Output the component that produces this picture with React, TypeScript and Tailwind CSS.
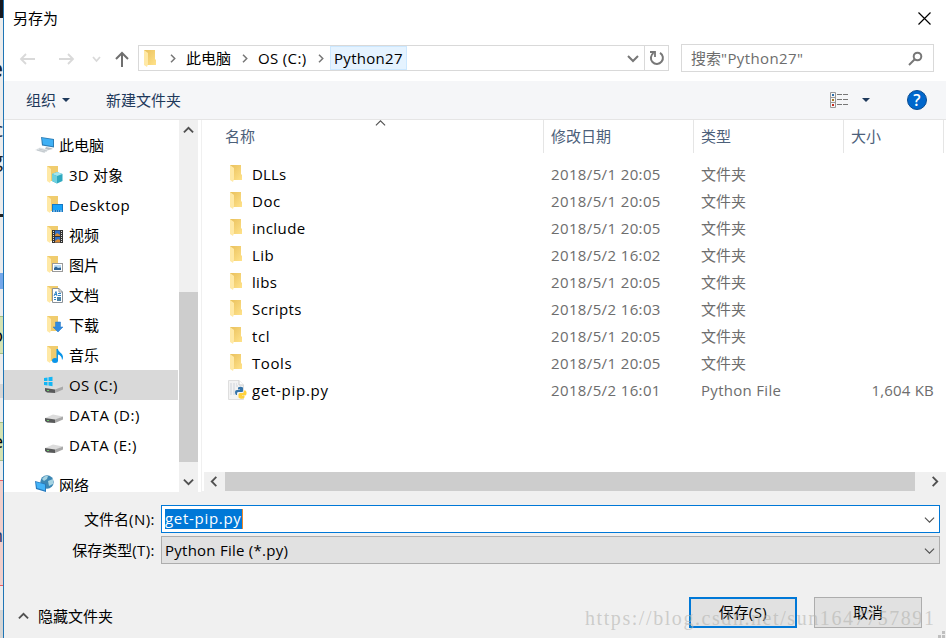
import React from "react";

type Badge = "cube" | "desktop" | "video" | "picture" | "document" | "download" | "music";

function Chevron({ d, size = 11, color = "#505050", w = 2 }: { d: "up" | "down" | "left" | "right"; size?: number; color?: string; w?: number }) {
  const paths = { up: "M1 8 L6 3 L11 8", down: "M1 4 L6 9 L11 4", left: "M8 1 L3 6 L8 11", right: "M4 1 L9 6 L4 11" };
  return (
    <svg width={size} height={size} viewBox="0 0 12 12" fill="none" stroke={color} strokeWidth={w} className="shrink-0">
      <path d={paths[d]} />
    </svg>
  );
}

function Folder() {
  return (
    <svg width="12" height="17" viewBox="0 0 12 17" className="shrink-0">
      <defs>
        <linearGradient id="fold" x1="0" x2="1" y1="0" y2="1">
          <stop offset="0" stopColor="#e9c05c" />
          <stop offset="1" stopColor="#ffe28a" />
        </linearGradient>
      </defs>
      <path d="M0 0H11V9L12 10V15H2L0 14Z" fill="url(#fold)" />
      <path d="M0 0L4 3V14L3 17L0 15Z" fill="#ffe9a6" />
    </svg>
  );
}

function BadgeShape({ kind }: { kind: Badge }) {
  switch (kind) {
    case "cube":
      return (
        <g>
          <path d="M5 8L10 6L15.500 8V15L10 17.500L5 15Z" fill="#2fa9c0" />
          <path d="M5 8L10 6L15.500 8L10 10Z" fill="#a6e6ee" />
          <path d="M5 8L10 10V17.500L5 15Z" fill="#6fd0de" />
        </g>
      );
    case "desktop":
      return (
        <g>
          <rect x="5" y="8" width="11" height="8" fill="#1478c4" />
          <rect x="6" y="9" width="9" height="5" fill="#18a4f8" />
          <path d="M6 15H8M9 15H10M11 15H12M13 15H15" stroke="#bfe4ff" />
        </g>
      );
    case "video":
      return (
        <g>
          <rect x="5" y="4" width="11" height="13" fill="#333" />
          <path d="M6.500 5V17M14.500 5V17" stroke="#ddd" strokeDasharray="1 1" />
          <rect x="8" y="4.500" width="5" height="5.500" fill="#3170c8" />
          <rect x="8" y="11" width="5" height="5.500" fill="#3170c8" />
          <path d="M8 9L10 7L13 9V10H8ZM8 15L11 13L13 14V16.500H8Z" fill="#d98b34" />
        </g>
      );
    case "picture":
      return (
        <g>
          <rect x="5.500" y="7.500" width="10" height="8" fill="#fff" stroke="#9a9a9a" />
          <rect x="7" y="9" width="7" height="5" fill="#b7daf5" />
          <path d="M7 12L9 10.500L11 12L14 11.500V14H7Z" fill="#2f6597" />
        </g>
      );
    case "document":
      return (
        <g>
          <path d="M5.500 2.500H12L15.500 6V16.500H5.500Z" fill="#fff" stroke="#8b9298" />
          <path d="M12 2.500V6H15.500" fill="none" stroke="#8b9298" />
          <path d="M11 7.500H14M11 9.500H14M7 11.500H9M7 13.500H9" stroke="#2d83c5" />
          <path d="M7 10L9 5.500L10 10M7.500 8.500H10" fill="none" stroke="#2d83c5" />
          <rect x="10" y="11" width="4" height="4" fill="#4b83a8" />
        </g>
      );
    case "download":
      return <path d="M8.500 6H13.500V11H16L11 16L6 11H8.500Z" fill="#318be0" stroke="#2476c4" strokeWidth=".5" />;
    case "music":
      return (
        <g fill="#0a95e8">
          <ellipse cx="8" cy="14.500" rx="3" ry="2.500" />
          <path d="M9.500 3H11C11 6 16 7 16 11C16 12.500 15.500 13.500 15 14C15 10.500 13 9 11 8.500V15H9.500Z" />
        </g>
      );
  }
}

function BadgeFolder({ kind }: { kind: Badge }) {
  return (
    <svg width="17" height="18" viewBox="0 0 17 18" className="shrink-0">
      <path d="M0 0H11V15H2L0 14Z" fill="#f0cc6e" />
      <path d="M0 0L4 3V14L3 17L0 15Z" fill="#ffe9a6" />
      <BadgeShape kind={kind} />
    </svg>
  );
}

function Drive({ os = false }: { os?: boolean }) {
  return (
    <svg width="20" height="18" viewBox="0 0 20 18" className="shrink-0">
      <path d="M1 12L9 8.500L19 10.500L11 14Z" fill="#dcdcdc" />
      <path d="M1 12L11 13.500V17L3 16.500L1 15Z" fill="#58595a" />
      <path d="M11 13.500L19 10.500V13.500L11 17Z" fill="#a9a9a9" />
      <rect x="3" y="14" width="2" height="1" fill="#6ec96e" />
      {os && (
        <path fill="#12b6f5" d="M0 2L3.500 1.500V5H0ZM4.500 1.300L8.500 .7V5H4.500ZM0 6H3.500V9.500L0 9ZM4.500 6H8.500V10.200L4.500 9.600Z" />
      )}
    </svg>
  );
}

function Computer() {
  return (
    <svg width="20" height="18" viewBox="0 0 20 18" className="shrink-0">
      <path d="M6 1L19 3V11.500L7 9.500Z" fill="#2d7db5" />
      <path d="M7 2L18 3.800V10.300L8 8.600Z" fill="#3fb0f5" />
      <path d="M11 11L16 12L18 13L13 14L10 13Z" fill="#b5bdc3" />
      <path d="M0 14L5 11.500L14 14L9 17Z" fill="#dfe4e7" />
      <path d="M2 14L10 16M4 13L12 15" stroke="#aeb5ba" strokeWidth=".6" />
    </svg>
  );
}

function Network() {
  return (
    <svg width="19" height="18" viewBox="0 0 19 18" className="shrink-0">
      <circle cx="12" cy="7" r="6.700" fill="#3c87b4" />
      <path d="M7 4Q10 0 13 1L12 4L9 6ZM13 6L18 4L18 9L14 11Z" fill="#a5d3e2" />
      <path d="M0 6L11 9V17L1 14Z" fill="#2679bd" />
      <path d="M1 7L10 9.500V15.500L2 13Z" fill="#43b3f8" />
    </svg>
  );
}

function PyFile() {
  return (
    <svg width="19" height="20" viewBox="0 0 19 20" className="shrink-0">
      <path d="M.5.5H11L15.500 5V19.500H.5Z" fill="#f3f3f3" stroke="#dedede" />
      <path d="M11 .5V5H15.500" fill="#fff" stroke="#ccc" />
      <path d="M2 4H9M2 6H11M2 8H8M2 10H7M2 12H7M2 14H7" stroke="#cfd3da" strokeDasharray="2 1" />
      <path d="M10 7.500Q12.500 6 15 7.500V11Q15 12 14 12H10Q9 12 9 13.500V15H8Q7 14 7 12Q7 10 9 10H12V9.500H10Z" fill="#3473a8" />
      <path d="M16 10.500H17.500Q19 11.500 18.500 14Q18 15.500 17 15.500H14V16H16.500V17.500Q15 19.500 12 18.500L10.500 17.500V14.500Q10.500 13 12 13H15Q16 12.500 16 11.500Z" fill="#ffd13b" />
    </svg>
  );
}

const places: { label: string; kind?: Badge; os?: boolean; track?: string }[] = [
  { label: "3D 对象", kind: "cube", track: "tracking-[0.2px]" },
  { label: "Desktop", kind: "desktop", track: "tracking-[0.45px]" },
  { label: "视频", kind: "video" },
  { label: "图片", kind: "picture" },
  { label: "文档", kind: "document" },
  { label: "下载", kind: "download" },
  { label: "音乐", kind: "music" },
  { label: "OS (C:)", os: true, track: "tracking-[0.4px]" },
  { label: "DATA (D:)", track: "tracking-[0.6px]" },
  { label: "DATA (E:)", track: "tracking-[0.55px]" },
];

const files = [
  ["DLLs", "2018/5/1 20:05", "tracking-[0.15px]"],
  ["Doc", "2018/5/1 20:05", "tracking-[0.6px]"],
  ["include", "2018/5/1 20:05", "tracking-[0.4px]"],
  ["Lib", "2018/5/2 16:02", "tracking-[0.4px]"],
  ["libs", "2018/5/1 20:05", "tracking-[0.3px]"],
  ["Scripts", "2018/5/2 16:03", "tracking-[0.4px]"],
  ["tcl", "2018/5/1 20:05", "tracking-[0.6px]"],
  ["Tools", "2018/5/1 20:05", "tracking-[0.6px]"],
  ["get-pip.py", "2018/5/2 16:01", "tracking-[0.72px]"],
];

function PageEdge() {
  return (
    <div className="flex h-full w-[3px] shrink-0 flex-col overflow-hidden bg-[#ececec]">
      <div className="h-[18px] bg-[#151820]" />
      <div className="mt-[40px] flex h-[19px] justify-end text-[24px] leading-[19px] font-bold text-[#1c2430]">e</div>
      <div className="mt-[44px] flex h-[18px] justify-end text-[20px] leading-[18px] text-[#1c3050]">c</div>
      <div className="mt-[12px] flex h-[20px] justify-end text-[20px] leading-[18px] text-[#222]">g</div>
      <div className="mt-[43px] h-[3px] bg-[#222]" />
      <div className="mt-[56px] h-[16px] bg-[#74a7ea]" />
      <div className="mt-[27px] flex h-[38px] justify-end border-y border-[#a5bd83] bg-[#d5e2b2] text-[18px] leading-[36px]">o</div>
      <div className="mt-[30px] h-[14px] bg-[#d5d5d5]" />
      <div className="mt-[24px] flex h-[39px] justify-end border-y border-[#a5bd83] bg-[#d5e2b2] text-[18px] leading-[36px]">e</div>
      <div className="mt-[19px] flex h-[106px] justify-end border-y border-[#ec5f65] bg-[#f0cfcb] pt-[40px] text-[18px] leading-[28px] text-[#21386b]">n</div>
      <div className="mt-[24px] flex-1 bg-[#d5d5d5]" />
    </div>
  );
}

function AddressBar() {
  return (
    <div className="mt-[9px] flex h-[26px] w-[531px] border border-[#d9d9d9] bg-white">
      <div className="flex flex-1 items-center">
        <div className="ml-[5px]"><Folder /></div>
        <div className="ml-[12px] flex"><Chevron d="right" size={9} color="#777" /></div>
        <span className="-mt-px ml-[9px] w-[47px]">此电脑</span>
        <div className="ml-[7px] flex"><Chevron d="right" size={9} color="#777" /></div>
        <span className="-mt-px ml-[9px] w-[49px] tracking-[0.35px] whitespace-nowrap">OS (C:)</span>
        <div className="ml-[9px] flex"><Chevron d="right" size={9} color="#777" /></div>
        <span className="ml-[5px] flex h-[24px] w-[77px] items-center border border-[#cce8ff] bg-[#e5f3ff] pb-px pl-[3px] tracking-[0.3px]">Python27</span>
      </div>
      <div className="flex w-[23px] items-center justify-center"><Chevron d="down" size={12} color="#777" /></div>
      <div className="flex w-[24px] items-center justify-center border-l border-[#d9d9d9]">
        <svg width="16" height="16" viewBox="0 0 16 16" fill="none" stroke="#777" strokeWidth="2">
          <path d="M11 2.800A6 6 0 1 1 4.500 3" />
          <path d="M1 2H6V7" strokeWidth="1.800" />
        </svg>
      </div>
    </div>
  );
}

function Sidebar() {
  return (
    <div className="h-[372px] w-[175px] overflow-hidden pt-[10px]">
      <div className="flex h-[30px] items-center pl-[31px]">
        <Computer />
        <span className="ml-[4px]">此电脑</span>
      </div>
      {places.map((p) => (
        <div key={p.label} className={"flex h-[30px] w-[174px] items-center " + (p.os ? "bg-[#d9d9d9] " : "") + (p.kind ? "pl-[43px]" : "pl-[40px]")}>
          {p.kind ? <BadgeFolder kind={p.kind} /> : <Drive os={p.os} />}
          <span className={"ml-[5px] " + (p.track ?? "")}>{p.label}</span>
        </div>
      ))}
      <div className="mt-[9px] flex h-[30px] items-center pl-[31px]">
        <Network />
        <span className="ml-[5px] pt-px">网络</span>
      </div>
    </div>
  );
}

function FileList() {
  return (
    <div className="flex flex-1 flex-col border-l border-[#f0f0f0]">
      <div className="flex h-[33px] text-[#4c607a]">
        <div className="relative w-[342px] border-r border-[#e5e5e5] pl-[23px] leading-[33px]">
          名称
          <div className="absolute top-[-2px] left-[173px]"><Chevron d="up" size={11} w={1.200} /></div>
        </div>
        <div className="w-[150px] border-r border-[#e5e5e5] pl-[7px] leading-[33px]">修改日期</div>
        <div className="w-[150px] border-r border-[#e5e5e5] pl-[7px] leading-[33px]">类型</div>
        <div className="w-[100px] border-r border-[#e5e5e5] pl-[7px] leading-[33px]">大小</div>
      </div>
      <div className="flex-1 pt-[7px]">
        {files.map(([name, date, track]) => {
          const py = name === "get-pip.py";
          return (
            <div key={name} className="flex h-[27px] items-center text-[#6d6d6d]">
              <div className="flex w-[349px] items-center text-black">
                <div className={"flex w-[50px] " + (py ? "pl-[26px]" : "pl-[28px]")}>{py ? <PyFile /> : <Folder />}</div>
                <span className={track}>{name}</span>
              </div>
              <span className="w-[150px] tracking-[0.37px]">{date}</span>
              <span className={"w-[150px] " + (py ? "tracking-[0.3px]" : "")}>{py ? "Python File" : "文件夹"}</span>
              <span className="w-[83px] text-right tracking-[0.2px]">{py ? "1,604 KB" : ""}</span>
            </div>
          );
        })}
      </div>
      <div className="ml-[2px] flex h-[19px] items-center bg-[#f0f0f0]">
        <div className="flex w-[21px] justify-center"><Chevron d="left" /></div>
        <div className="h-[19px] w-[690px] bg-[#cdcdcd]" />
        <div className="flex flex-1 justify-center pl-[7px]"><Chevron d="right" /></div>
      </div>
      <div className="h-px bg-[#f0f0f0]" />
    </div>
  );
}

export default function App() {
  return (
    <div className="flex h-[638px] w-[946px] overflow-hidden bg-white font-['Open_Sans','Noto_Sans_CJK_SC',sans-serif] text-[15px] leading-[20px] text-black">
      <PageEdge />
      <div className="relative flex w-[943px] flex-col border-l border-[#1f75b5]">
        <div className="flex h-[36px] items-center justify-between pr-[15px] pl-[9px]">
          <span className="-mt-px">另存为</span>
          <svg width="13" height="13" viewBox="0 0 13 13" stroke="#000" strokeWidth="1.200"><path d="M.5.5L12.500 12.500M12.500.5L.5 12.500" /></svg>
        </div>
        <div className="flex h-[45px]">
          <div className="flex w-[134px] items-center pt-[1px] pl-[15px]">
            <svg width="112" height="18" viewBox="0 0 112 18" fill="none" stroke="#d9d9d9" strokeWidth="1.800">
              <path d="M2 9H16M7 4L2 9L7 14M40 9H54M49 4L54 9L49 14" />
              <path d="M74 7L77.500 11L81 7" />
              <path d="M103 17V3M97 9L103 3L109 9" stroke="#6f6f6f" strokeWidth="2" />
            </svg>
          </div>
          <AddressBar />
          <div className="mt-[8px] ml-[12px] flex h-[28px] w-[253px] items-center justify-between border border-[#d9d9d9] pr-[10px] pl-[9px] text-[#6d6d6d]">
            <span>搜索<span className="tracking-[0.4px]">"Python27"</span></span>
            <svg width="15" height="15" viewBox="0 0 15 15" fill="none" stroke="#777" strokeWidth="2"><circle cx="9.500" cy="5.500" r="3.800" /><path d="M6.500 8.500L1 14" /></svg>
          </div>
        </div>
        <div className="flex h-[39px] items-center border-b border-[#e5e5e5] bg-[#f5f6f8] text-[#1e395b]">
          <span className="ml-[22px]">组织</span>
          <div className="ml-[6px] h-0 w-0 border-x-4 border-t-4 border-x-transparent border-t-[#1e395b]" />
          <span className="ml-[36px]">新建文件夹</span>
          <svg width="19" height="16" viewBox="0 0 19 16" className="ml-auto" fill="none">
            <path d="M.5.5H5.500V15.500H.5ZM.5 5.500H5.500M.5 10.500H5.500" stroke="#999" />
            <path d="M7 2.500H12M13 2.500H18M7 7.500H12M13 7.500H18M7 12.500H12M13 12.500H18" stroke="#777" />
            <rect x="2" y="2" width="2" height="2" fill="#2d6eaa" />
            <rect x="2" y="7" width="2" height="2" fill="#a87822" />
            <rect x="2" y="12" width="2" height="2" fill="#c62e20" />
          </svg>
          <div className="ml-[13px] h-0 w-0 border-x-4 border-t-4 border-x-transparent border-t-[#1e395b]" />
          <div className="mr-[19px] ml-[37px] flex h-[20px] w-[20px] items-center justify-center rounded-full border border-[#0a4c92] bg-[#0067cc] text-[16px] font-semibold text-white">?</div>
        </div>
        <div className="flex h-[372px]">
          <Sidebar />
          <div className="mr-[3px] flex w-[19px] flex-col items-center bg-[#f0f0f0]">
            <div className="flex h-[20px] items-center"><Chevron d="up" /></div>
            <div className="mt-[152px] h-[170px] w-full bg-[#cdcdcd]" />
            <div className="mt-auto flex h-[22px] items-center"><Chevron d="down" /></div>
          </div>
          <FileList />
        </div>
        <div className="flex-1 bg-[#f0f0f0] pt-[13px]">
          <div className="flex h-[28px] items-center">
            <span className="w-[151px] text-right">文件名<span className="tracking-[0.45px]">(N):</span></span>
            <div className="ml-[6px] flex h-[28px] w-[779px] items-center justify-between border border-[#0078d7] bg-white pr-[4px] pl-[3px]">
              <span className="-mt-px h-[20px] border-r border-[#f08828] bg-[#0078d7] leading-[19px] tracking-[0.7px] text-white">get-pip.py</span>
              <Chevron d="down" size={11} w={1.200} />
            </div>
          </div>
          <div className="mt-[3px] flex h-[28px] items-center">
            <span className="w-[151px] text-right">保存类型<span className="tracking-[0.45px]">(T):</span></span>
            <div className="ml-[6px] flex h-[28px] w-[779px] items-center justify-between border border-[#adadad] bg-[#e1e1e1] pr-[4px] pl-[3px]">
              <span className="tracking-[0.25px]">Python File (*.py)</span>
              <Chevron d="down" size={11} w={1.200} />
            </div>
          </div>
          <div className="mt-[33px] flex h-[31px]">
            <div className="mt-[9px] ml-[14px] flex h-[20px] w-[671px] items-center">
              <Chevron d="up" size={11} />
              <span className="ml-[9px]">隐藏文件夹</span>
            </div>
            <button className="h-[31px] w-[108px] border-2 border-[#0078d7] bg-[#e1e1e1] pb-[2px]">保存<span className="tracking-[0.5px]">(S)</span></button>
            <button className="ml-[17px] h-[31px] w-[108px] border border-[#adadad] bg-[#e1e1e1] pb-[2px]">取消</button>
          </div>
        </div>
        <div className="pointer-events-none absolute top-[606px] left-[581px] font-['Liberation_Serif',serif] text-[20px] leading-[24px] tracking-[1.57px] whitespace-nowrap text-[#b4b4b0]/60">https://blog.csdn.net/sun1647757891</div>
        <svg className="absolute right-0 bottom-0" width="8" height="7" fill="#bfbfbf"><path d="M4 0H7V3H4ZM4 4H7V7H4ZM0 4H3V7H0Z" /></svg>
      </div>
    </div>
  );
}
